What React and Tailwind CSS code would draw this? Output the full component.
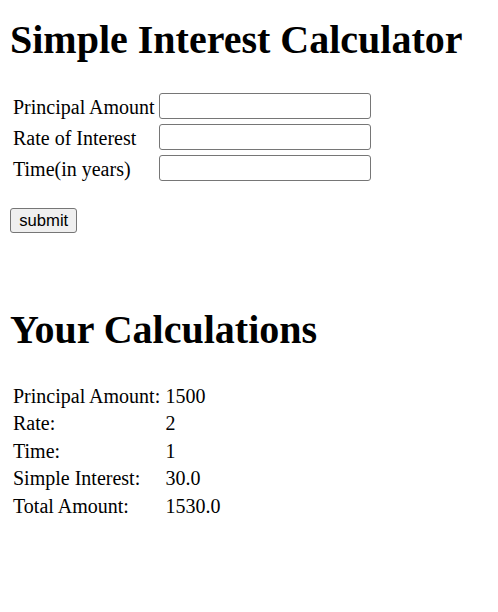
import { useState } from "react";

const results = [
  ["Principal Amount:", "1500"],
  ["Rate:", "2"],
  ["Time:", "1"],
  ["Simple Interest:", "30.0"],
  ["Total Amount:", "1530.0"],
];

function App() {
  const [principal, setPrincipal] = useState("");
  const [rate, setRate] = useState("");
  const [time, setTime] = useState("");

  const fields = [
    ["Principal Amount", principal, setPrincipal],
    ["Rate of Interest", rate, setRate],
    ["Time(in years)", time, setTime],
  ];

  return (
    <div className="min-h-screen bg-white px-[10px] pt-[16.5px] font-['Liberation_Serif',serif] text-[20px] text-black">
      <h1 className="text-[40px] font-bold leading-[46px]">
        Simple Interest Calculator
      </h1>

      <form onSubmit={(e) => e.preventDefault()}>
        <div className="ml-[3px] mt-[30.5px] flex flex-col gap-[6px]">
          {fields.map(([label, value, setValue]) => (
            <div key={label} className="flex h-[25px] items-start">
              <label className="mt-[2.5px] w-[146px] leading-[23px]">
                {label}
              </label>
              <input
                value={value}
                onChange={(e) => setValue(e.target.value)}
                className="h-[25.5px] w-[211.5px] rounded-[3px] border border-[#767676] bg-white px-[2px] font-['Liberation_Sans',Arial,sans-serif] text-[16.67px] outline-none"
              />
            </div>
          ))}
        </div>

        <button
          type="submit"
          className="mt-[28px] flex h-[25.4px] w-[67.4px] items-center justify-center rounded-[3px] border border-[#767676] bg-[#efefef] pt-[1px] font-['Liberation_Sans',Arial,sans-serif] text-[16.67px] leading-none text-black"
        >
          submit
        </button>
      </form>

      <h1 className="mt-[74px] text-[40px] font-bold leading-[46px]">
        Your Calculations
      </h1>

      <div className="ml-[3px] mt-[29.5px] grid grid-cols-[152.5px_auto]">
        {results.map(([label, value]) => (
          <div key={label} className="contents">
            <div className="leading-[27.5px]">{label}</div>
            <div className="leading-[27.5px]">{value}</div>
          </div>
        ))}
      </div>
    </div>
  );
}

export default App;
